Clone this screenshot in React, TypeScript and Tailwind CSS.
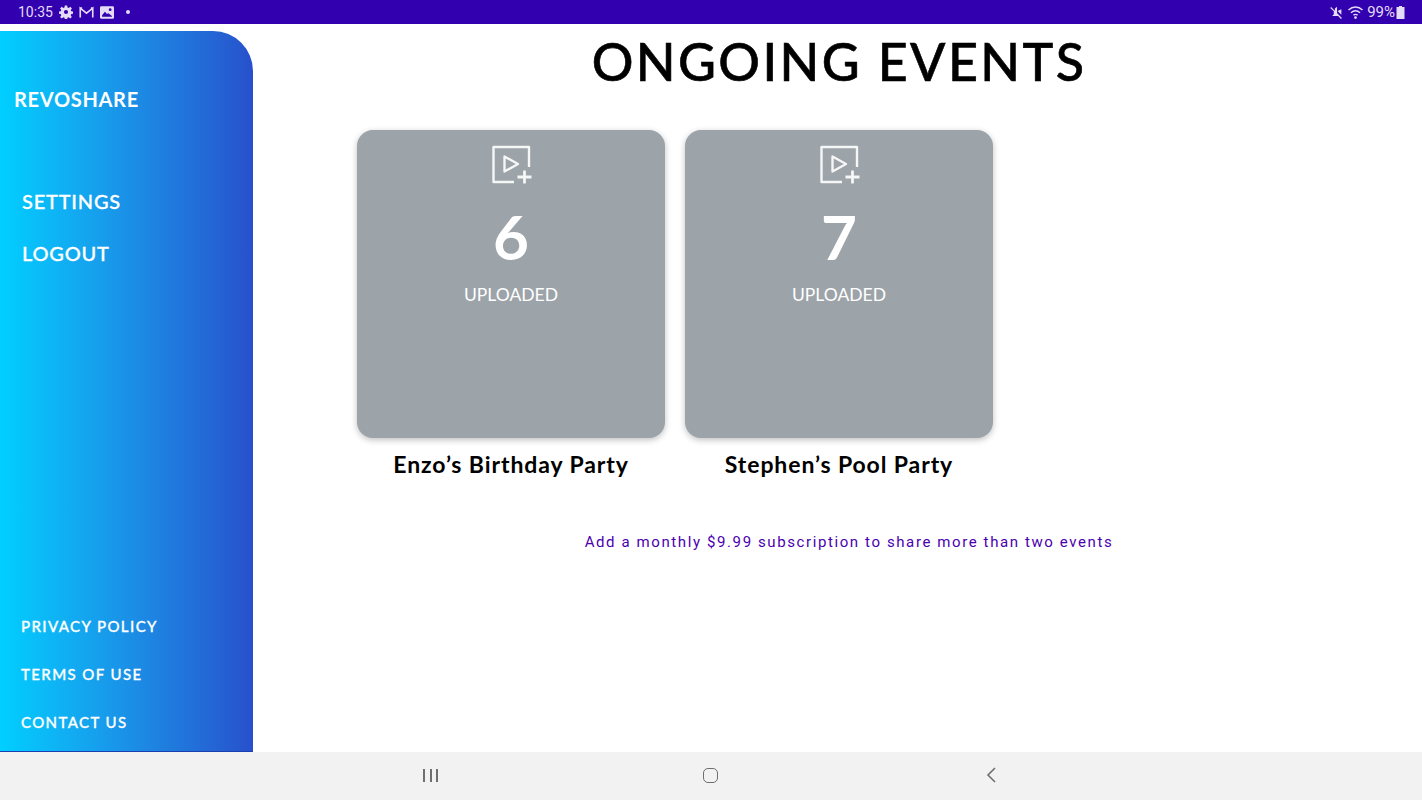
import React from 'react'

const jost = { fontFamily: 'Lato, "Open Sans", sans-serif' }

function UploadIcon() {
  return (
    <svg width="40" height="40" viewBox="0 0 40 40" fill="none" stroke="white" strokeWidth="2.400" strokeLinejoin="round" className="ml-[1px] opacity-90">
      <path d="M22 37H1.500V2H37v20" />
      <path d="M12.500 11.500v15L26 19z" />
      <path d="M25.500 32h14M32.500 25.500v13" strokeWidth="2.800" />
    </svg>
  )
}

function EventCard({ count, name }: { count: number; name: string }) {
  return (
    <div className="flex w-[308px] flex-col items-center">
      <div className="flex h-[308px] w-[308px] flex-col items-center rounded-[16px] bg-[#9ca3a9] pt-[15px] text-white shadow-[0_2px_6px_rgba(0,0,0,0.25)]">
        <UploadIcon />
        <div className="mt-[16px] text-[62px] font-bold leading-[70px]">{count}</div>
        <div className="mt-[10px] text-[17.500px] font-normal leading-[28px]">UPLOADED</div>
      </div>
      <div className="mt-[12px] text-[23px] font-bold leading-[28px] tracking-[0.9px] text-black">{name}</div>
    </div>
  )
}

export default function App() {
  return (
    <div className="flex h-[800px] w-[1422px] flex-col overflow-hidden bg-white" style={jost}>
      {/* Status bar */}
      <div className="flex h-6 items-center justify-between bg-[#3300b0] pl-[18px] pr-[17px] font-['Roboto'] text-[14px] text-[#e4dcf6]">
        <div className="flex items-center">
          <span>10:35</span>
          <svg width="14" height="14" viewBox="0 0 24 24" fill="currentColor" className="ml-[6px]">
            <path fillRule="evenodd" d="M10 1h4l.6 3.200 2 .9L19.400 3l2.800 2.800-2 2.800.8 2 3 .5v4l-3 .5-.9 2 1.900 2.800-2.800 2.800-2.800-2-2 .8-.4 3h-4l-.5-3-2-.8-2.800 2-2.800-2.800 2-2.800-.9-2-3-.5v-4l3-.5.9-2-2-2.800L4.600 3l2.800 2.100 2-.9zM12 8.500a3.500 3.500 0 100 7 3.500 3.500 0 000-7z" />
          </svg>
          <svg width="15" height="13" viewBox="0 0 24 20" fill="none" stroke="currentColor" strokeWidth="2.600" className="ml-[6px]">
            <path d="M2 18V3l10 8 10-8v15M2 3h3M19 3h3" />
          </svg>
          <svg width="14" height="13" viewBox="0 0 20 18" className="ml-[6px]">
            <rect x="0" y="0" width="20" height="18" rx="2" fill="currentColor" />
            <circle cx="14.500" cy="5" r="2" fill="#3300b0" />
            <path d="M3 13l4-5 3 3 2-1 5 4v1H3z" fill="#3300b0" />
          </svg>
          <span className="ml-[12px] h-1 w-1 rounded-full bg-current" />
        </div>
        <div className="flex items-center">
          <svg width="13" height="13" viewBox="0 0 24 24" fill="currentColor">
            <path d="M2 2l20 20-1.800 1.800L15 18.500H4l3-3.500V9.500L.5 3.500zM9 4.500l4-3v14L9 10zM14 9l7-3v10z" />
          </svg>
          <svg width="17" height="14" viewBox="0 0 24 20" fill="none" stroke="currentColor" strokeWidth="2" className="ml-[4px]">
            <path d="M2 7c6-5.500 14-5.500 20 0M5.500 11c4-3.500 9-3.500 13 0M9 14.500c2-1.500 4-1.500 6 0" />
            <circle cx="12" cy="18" r="1" fill="currentColor" />
          </svg>
          <span className="ml-[3px] text-[15px]">99%</span>
          <svg width="9" height="13" viewBox="0 0 8 13" className="ml-[1px]">
            <path d="M2.500 0h3v1H8v12H0V1h2.500z" fill="currentColor" />
          </svg>
        </div>
      </div>

      <div className="flex min-h-0 flex-1">
        {/* Sidebar */}
        <div className="mt-[7px] flex w-[253px] flex-col rounded-tr-[40px] border-b border-[#1a3fb0] bg-gradient-to-r from-[#00cfff] to-[#2750cc] text-white">
          <div className="pl-[14px] pt-[55px] text-[20px] font-bold leading-[26px] tracking-[0.7px]">REVOSHARE</div>
          <div className="mt-[75px] flex flex-col gap-[24px] pl-[22px] text-[20px] font-medium leading-[28px] tracking-[0.8px] [-webkit-text-stroke:0.3px_white]">
            <span>SETTINGS</span>
            <span>LOGOUT</span>
          </div>
          <div className="mt-auto flex flex-col gap-[26px] pb-[18px] pl-[21px] text-[15px] font-medium leading-[22px] tracking-[1.400px] [-webkit-text-stroke:0.3px_white]">
            <span>PRIVACY POLICY</span>
            <span>TERMS OF USE</span>
            <span>CONTACT US</span>
          </div>
        </div>

        {/* Main */}
        <div className="flex flex-1 flex-col">
          <h1 className="ml-[3px] mt-[6px] text-center text-[52px] font-medium leading-[62px] tracking-[2.400px] text-black [-webkit-text-stroke:0.6px_black]">
            ONGOING EVENTS
          </h1>
          <div className="ml-[104px] mt-[38px] flex gap-[20px]">
            <EventCard count={6} name="Enzo’s Birthday Party" />
            <EventCard count={7} name="Stephen’s Pool Party" />
          </div>
          <p className="ml-[23px] mt-[53px] text-center font-['Roboto'] text-[15px] leading-[22px] tracking-[1.600px] text-[#4b00b0]">
            Add a monthly $9.99 subscription to share more than two events
          </p>
        </div>
      </div>

      {/* Nav bar */}
      <div className="flex h-12 items-center bg-[#f2f2f2] pb-[2px] text-[#6f6f6f]">
        <div className="ml-[423px] flex gap-[4.500px]">
          <span className="h-[13px] w-[2px] bg-current" />
          <span className="h-[13px] w-[2px] bg-current" />
          <span className="h-[13px] w-[2px] bg-current" />
        </div>
        <div className="ml-[265px] h-[15px] w-[15px] rounded-[5px] border-[1.500px] border-current" />
        <svg width="10" height="16" viewBox="0 0 10 16" fill="none" stroke="currentColor" strokeWidth="1.600" className="ml-[268px]">
          <path d="M9 1L2 8l7 7" />
        </svg>
      </div>
    </div>
  )
}
